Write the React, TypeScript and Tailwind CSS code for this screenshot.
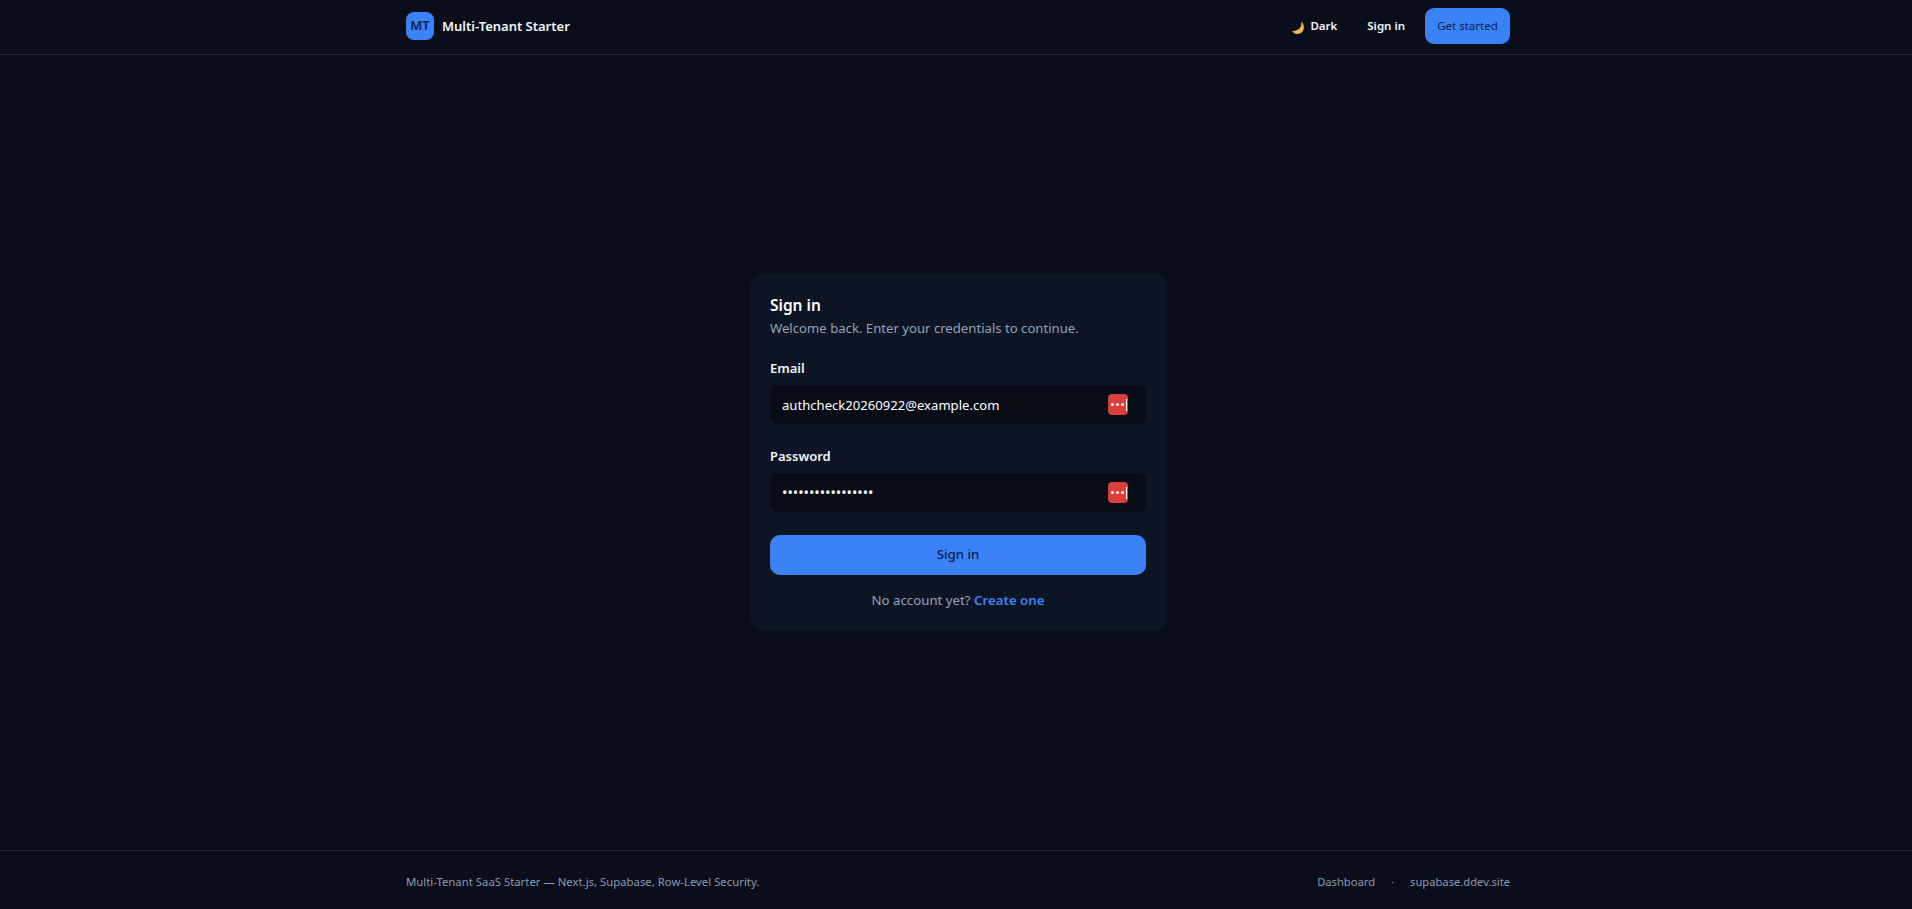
const font = { fontFamily: '"Noto Sans", "Open Sans", sans-serif' };

const PassIcon = () => (
    <div className="absolute right-[18px] top-[9px] flex h-[21px] w-[20px] items-center justify-center gap-[2px] rounded-[4px] bg-[#dc3e3c] pl-[1px]">
        <span className="h-[3px] w-[3px] rounded-full bg-white" />
        <span className="h-[3px] w-[3px] rounded-full bg-white" />
        <span className="h-[3px] w-[3px] rounded-full bg-white" />
        <span className="h-[12px] w-[1px] bg-white" />
    </div>
);

const Field = ({ label, type, value, size }: { label: string; type: string; value: string; size: string }) => (
    <div>
        <label className="block h-[18px] text-[13px] leading-[16px] font-semibold text-[#f3f5f9]">{label}</label>
        <div className="relative mt-[7px]">
            <input
                readOnly
                type={type}
                value={value}
                className={`h-[39px] w-full rounded-[8px] bg-[#080c17] px-3 text-white outline-none ${size}`}
                style={font}
            />
            <PassIcon />
        </div>
    </div>
);

export default function App() {
    return (
        <div className="flex min-h-[909px] flex-col bg-[#090e1a] text-white" style={font}>
            <nav className="h-[55px] border-b border-[#1f2633] pl-1">
                <div className="mx-auto flex h-[52px] max-w-[1104px] items-center justify-between">
                    <div className="flex items-center gap-2">
                        <div className="flex h-[28px] w-[28px] items-center justify-center rounded-[8px] bg-[#3b82f6] text-[13px] font-semibold text-[#0b1f4d]">MT</div>
                        <span className="mt-[1px] text-[13px] font-semibold text-[#f3f5f9]">Multi-Tenant Starter</span>
                    </div>
                    <div className="flex items-center text-[11.5px] font-semibold text-[#f3f5f9]">
                        <svg width="14" height="14" viewBox="0 0 13 13" className="mr-[5px] mt-[3px]">
                            <path d="M9.5 0.5C10.5 5 7.5 9.5 1 9.2C3 12.5 7.5 13 10.2 10.5C12.8 8 12.5 2.5 9.5 0.5Z" fill="#f4b350" />
                        </svg>
                        <span className="mr-[30px]">Dark</span>
                        <span className="mr-[20px]">Sign in</span>
                        <div className="flex h-[36px] w-[85px] items-center justify-center rounded-[9px] bg-[#3b82f6] font-normal text-[#0b1f4d]">Get started</div>
                    </div>
                </div>
            </nav>

            <main className="flex h-[795px] items-start justify-center pl-1 pt-[219px]">
                <div className="w-[416px] rounded-[12px] bg-[#0d1424] px-5 pt-[19px] pb-[20px]">
                    <h1 className="text-[15.5px] leading-6 font-semibold text-white">Sign in</h1>
                    <p className="mt-[1px] text-[13.15px] leading-5 text-[#94a3b8]">Welcome back. Enter your credentials to continue.</p>
                    <div className="mt-[22px] flex flex-col gap-[24px]">
                        <Field label="Email" type="text" value="authcheck20260922@example.com" size="text-[13.1px]" />
                        <Field label="Password" type="password" value="aaaaaaaaaaaaaaaaa" size="text-[14.3px]" />
                    </div>
                    <button className="mt-[23px] h-[40px] w-full rounded-[10px] bg-[#3b82f6] text-[13.25px] font-medium text-[#0b1f4d]">Sign in</button>
                    <p className="mt-[15px] text-center text-[13.25px] leading-5 text-[#94a3b8]">
                        No account yet? <a className="font-semibold text-[#3b82f6]">Create one</a>
                    </p>
                </div>
            </main>

            <footer className="h-[59px] border-t border-[#1f2633] pl-1 pt-[4px] text-[#8a9bb2]">
                <div className="mx-auto flex h-[54px] max-w-[1104px] items-center justify-between">
                    <span className="text-[11.35px]">Multi-Tenant SaaS Starter — Next.js, Supabase, Row-Level Security.</span>
                    <div className="flex items-center gap-[16px] text-[11.2px]">
                        <span>Dashboard</span>
                        <span>·</span>
                        <span>supabase.ddev.site</span>
                    </div>
                </div>
            </footer>
        </div>
    );
}
